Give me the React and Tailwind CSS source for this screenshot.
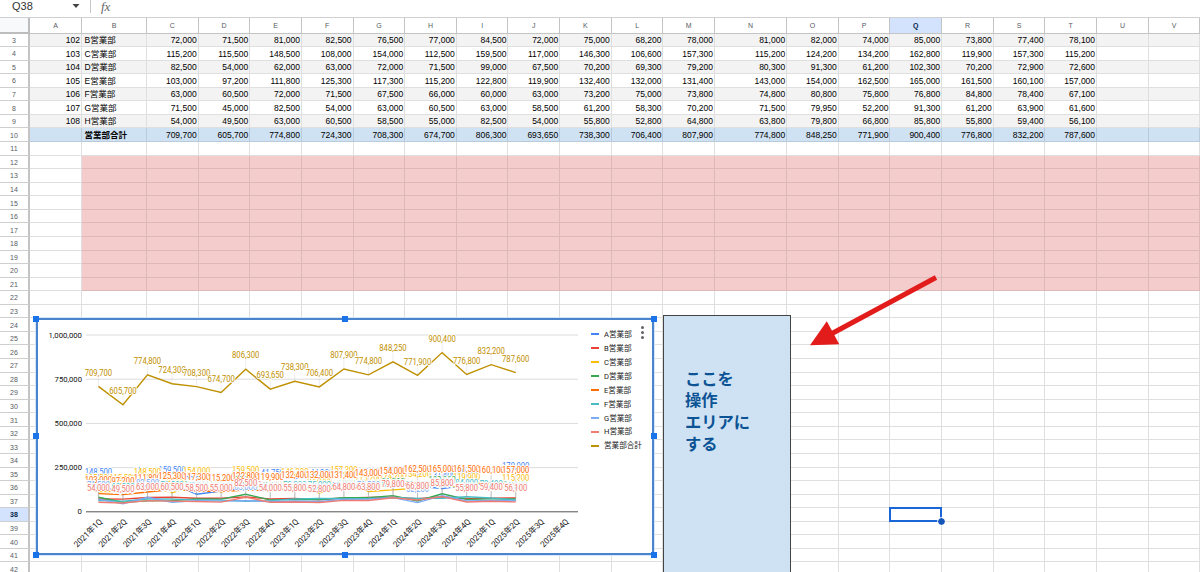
import React from "react";
import clsx from "clsx";

const COLS = "ABCDEFGHIJKLMNOPQRSTUV".split("");

// one entry per department: sheet row, code, name, 2021 1Q .. 2025 2Q
const DEPARTMENTS = [
  { row: 3, code: 102, name: "B営業部", color: "#ea4335", values: [72000, 71500, 81000, 82500, 76500, 77000, 84500, 72000, 75000, 68200, 78000, 81000, 82000, 74000, 85000, 73800, 77400, 78100] },
  { row: 4, code: 103, name: "C営業部", color: "#fbbc04", values: [115200, 115500, 148500, 108000, 154000, 112500, 159500, 117000, 146300, 106600, 157300, 115200, 124200, 134200, 162800, 119900, 157300, 115200] },
  { row: 5, code: 104, name: "D営業部", color: "#34a853", values: [82500, 54000, 62000, 63000, 72000, 71500, 99000, 67500, 70200, 69300, 79200, 80300, 91300, 61200, 102300, 70200, 72900, 72600] },
  { row: 6, code: 105, name: "E営業部", color: "#ff6d01", values: [103000, 97200, 111800, 125300, 117300, 115200, 122800, 119900, 132400, 132000, 131400, 143000, 154000, 162500, 165000, 161500, 160100, 157000] },
  { row: 7, code: 106, name: "F営業部", color: "#46bdc6", values: [63000, 60500, 72000, 71500, 67500, 66000, 60000, 63000, 73200, 75000, 73800, 74800, 80800, 75800, 76800, 84800, 78400, 67100] },
  { row: 8, code: 107, name: "G営業部", color: "#7baaf7", values: [71500, 45000, 82500, 54000, 63000, 60500, 63000, 58500, 61200, 58300, 70200, 71500, 79950, 52200, 91300, 61200, 63900, 61600] },
  { row: 9, code: 108, name: "H営業部", color: "#f07b72", values: [54000, 49500, 63000, 60500, 58500, 55000, 82500, 54000, 55800, 52800, 64800, 63800, 79800, 66800, 85800, 55800, 59400, 56100] },
];

const TOTAL = {
  row: 10,
  code: "",
  name: "営業部合計",
  color: "#bf9000",
  values: [709700, 605700, 774800, 724300, 708300, 674700, 806300, 693650, 738300, 706400, 807900, 774800, 848250, 771900, 900400, 776800, 832200, 787600],
};

// row 2 is scrolled away, A is what remains of the total
const DEPT_A = {
  name: "A営業部",
  color: "#4285f4",
  values: TOTAL.values.map((t, i) => t - DEPARTMENTS.reduce((s, d) => s + d.values[i], 0)),
};

const SERIES = [DEPT_A, ...DEPARTMENTS, TOTAL];
const ROWS = Array.from({ length: 40 }, (_, i) => i + 3);
const QUARTERS = Array.from({ length: 20 }, (_, i) => `${2021 + Math.floor(i / 4)}年${(i % 4) + 1}Q`);

const fmt = (n) => n.toLocaleString("en-US");

const gridCols =
  "grid grid-cols-[30px_52px_65px_repeat(11,51.65px)_72.1px_repeat(8,51.67px)]";

function FormulaBar() {
  return (
    <div className="flex h-[18px] items-start border-b border-[#d0d0d0] bg-white">
      <div className="flex h-[13px] w-[91px] items-center justify-between border-r border-[#c7c7c7] pb-px pl-3 pr-[10px] text-[11px] leading-none text-[#333]">
        <span>Q38</span>
        <svg width="8" height="4" viewBox="0 0 8 4">
          <path d="M0.5 0h7L4 4z" fill="#444" />
        </svg>
      </div>
      <span className="ml-[10px] font-['Liberation_Serif',serif] text-[13px] italic leading-[14px] text-[#666]">
        fx
      </span>
    </div>
  );
}

function HeaderRow() {
  return (
    <div className={clsx(gridCols, "h-[15.5px] bg-white")}>
      <div className="border-b-2 border-r-2 border-[#bdbdbd] bg-[#f8f9fa]" />
      {COLS.map((c) => (
        <div
          key={c}
          className={clsx(
            "flex items-center justify-center border-b border-r border-[#c4c4c4] text-[7px] leading-none",
            c === "Q" ? "bg-[#d3e3fd] font-bold text-[#041e49]" : "text-[#575b5f]"
          )}
        >
          {c}
        </div>
      ))}
    </div>
  );
}

function SheetRow({ n }) {
  const data = n === 10 ? TOTAL : DEPARTMENTS.find((d) => d.row === n);

  const content = (i) => {
    if (!data) return null;
    if (i === 0) return data.code;
    if (i === 1) return data.name;
    return data.values[i - 2] ? fmt(data.values[i - 2]) : null;
  };

  return (
    <div className={clsx(gridCols, "h-[13.57px]")}>
      <div
        className={clsx(
          "flex items-center justify-center border-b border-r-2 border-b-[#cfcfcf] border-r-[#c4c4c4] pt-px text-[7px] leading-none",
          n === 38 ? "bg-[#d3e3fd] font-bold text-[#041e49]" : "bg-white text-[#575b5f]"
        )}
      >
        {n}
      </div>
      {COLS.map((c, i) => {
        const pink = n >= 12 && n <= 21 && i > 0;
        const active = n === 38 && c === "Q";
        return (
          <div
            key={c}
            className={clsx(
              "flex items-center whitespace-nowrap border-b border-r pt-px text-[8.5px] leading-none text-black",
              i === 1 ? "justify-start pl-[2.5px]" : "justify-end pr-[1px]",
              n === 10 && i === 1 && "font-bold",
              n === 10
                ? "border-[#b9cbda] bg-[#cfe2f3]"
                : pink
                ? "border-[#dcb8b8] bg-[#f4cccc]"
                : "border-[#dfdfdf]",
              n < 10 && n % 2 === 1 && "bg-[#f3f3f3]",
              active && "relative z-10"
            )}
          >
            {content(i)}
            {active && (
              <>
                <span className="absolute -left-px -top-px h-[15px] w-[53px] border-2 border-[#1b66d6]" />
                <span className="absolute -bottom-[4px] -right-[4px] h-[7px] w-[7px] rounded-full bg-[#1557b8] outline-1 outline-white" />
              </>
            )}
          </div>
        );
      })}
    </div>
  );
}

// plot coordinates are relative to the chart frame (36, 319)
const px = (i) => 62.4 + i * 24.55;
const py = (v) => 192.8 - (v / 1000000) * 176.8;

function LineChart() {
  return (
    <svg
      width="618"
      height="236"
      viewBox="0 0 618 236"
      className="block font-[Roboto,'Noto_Sans_CJK_JP',sans-serif]"
    >
      {[1000000, 750000, 500000, 250000, 0].map((v) => (
        <g key={v}>
          <line x1="50" x2="542" y1={py(v)} y2={py(v)} stroke={v ? "#dcdcdc" : "#555"} strokeWidth="1" />
          <text
            x="46"
            y={py(v) + 2.6}
            textAnchor="end"
            fontSize="8.1"
            textLength={v === 0 ? 4.4 : v === 1000000 ? 33.6 : 27.4}
            lengthAdjust="spacingAndGlyphs"
            fill="#111"
          >
            {fmt(v)}
          </text>
        </g>
      ))}
      {SERIES.map((s) => (
        <polyline
          key={s.name}
          points={s.values.map((v, i) => `${px(i)},${py(v)}`).join(" ")}
          fill="none"
          stroke={s.color}
          strokeWidth="1.4"
        />
      ))}
      {SERIES.map((s) => (
        <g key={s.name} fill={s.color} fontSize="8.2" textAnchor="middle">
          {s.values.map((v, i) => (
            <g key={i}>
              <line x1={px(i)} x2={px(i)} y1={py(v) - 9} y2={py(v)} stroke="#999" strokeOpacity="0.18" />
              <text
                x={px(i)}
                y={py(v) - 10.8}
                textLength={v < 100000 ? 23 : 27.4}
                lengthAdjust="spacingAndGlyphs"
                stroke="#fff"
                strokeWidth="1.8"
                paintOrder="stroke"
              >
                {fmt(v)}
              </text>
            </g>
          ))}
        </g>
      ))}
      {QUARTERS.map((q, i) => (
        <text
          key={q}
          transform={`translate(${px(i) + 4.4} 203.3) rotate(-45)`}
          textAnchor="end"
          fontSize="8.4"
          textLength="36"
          lengthAdjust="spacingAndGlyphs"
          fill="#222"
        >
          {q}
        </text>
      ))}
    </svg>
  );
}

const HANDLES = [
  "-left-[3px] -top-[2px]",
  "left-[306px] -top-[2px]",
  "-right-[3px] -top-[2px]",
  "-left-[3px] top-[115px]",
  "-right-[3px] top-[115px]",
  "-left-[3px] -bottom-[3px]",
  "left-[306px] -bottom-[3px]",
  "-right-[3px] -bottom-[3px]",
];

function ChartFrame() {
  return (
    <div className="absolute left-[36px] top-[318px] z-10 h-[237px] w-[618px] bg-white outline-1 outline-[#d5e5fb]">
      <div className="absolute inset-0 border-2 border-[#4a84cc]" />
      <div className="overflow-hidden pt-px">
        <LineChart />
      </div>
      <ul className="absolute left-[555px] top-[9.5px] flex flex-col font-[Roboto,'Noto_Sans_CJK_JP',sans-serif]">
        {SERIES.map((s) => (
          <li key={s.name} className="flex h-[13.98px] items-center gap-[5px] whitespace-nowrap text-[7.6px] leading-none text-[#222]">
            <span className="h-[2px] w-[8px]" style={{ backgroundColor: s.color }} />
            {s.name}
          </li>
        ))}
      </ul>
      <div className="absolute left-[605px] top-[8px] flex flex-col gap-[2px]">
        <span className="h-[3px] w-[3px] rounded-full bg-[#5f6368]" />
        <span className="h-[3px] w-[3px] rounded-full bg-[#5f6368]" />
        <span className="h-[3px] w-[3px] rounded-full bg-[#5f6368]" />
      </div>
      {HANDLES.map((pos) => (
        <span key={pos} className={clsx("absolute h-[6px] w-[6px] bg-[#1a73e8]", pos)} />
      ))}
    </div>
  );
}

export default function App() {
  return (
    <div className="relative h-[572px] w-[1200px] overflow-hidden bg-white font-['Liberation_Sans','Noto_Sans_CJK_JP',sans-serif]">
      <FormulaBar />
      <HeaderRow />
      {ROWS.map((n) => (
        <SheetRow key={n} n={n} />
      ))}

      <ChartFrame />

      {/* note box */}
      <div className="absolute left-[663px] top-[315px] h-[270px] w-[128px] border border-[#444] bg-[#cfe2f3] pl-[21px] pt-[52.5px] text-[16.3px] font-bold leading-[21.8px] text-[#0b5394]">
        <p>ここを</p>
        <p>操作</p>
        <p>エリアに</p>
        <p>する</p>
      </div>

      <svg className="absolute left-[805px] top-[270px]" width="140" height="80" viewBox="0 0 140 80">
        <path d="M131 7.5L27 63.5" stroke="#e21b1b" strokeWidth="5" />
        <path d="M5 75.3L21.8 51.3L34.3 74.2z" fill="#e21b1b" />
      </svg>
    </div>
  );
}
